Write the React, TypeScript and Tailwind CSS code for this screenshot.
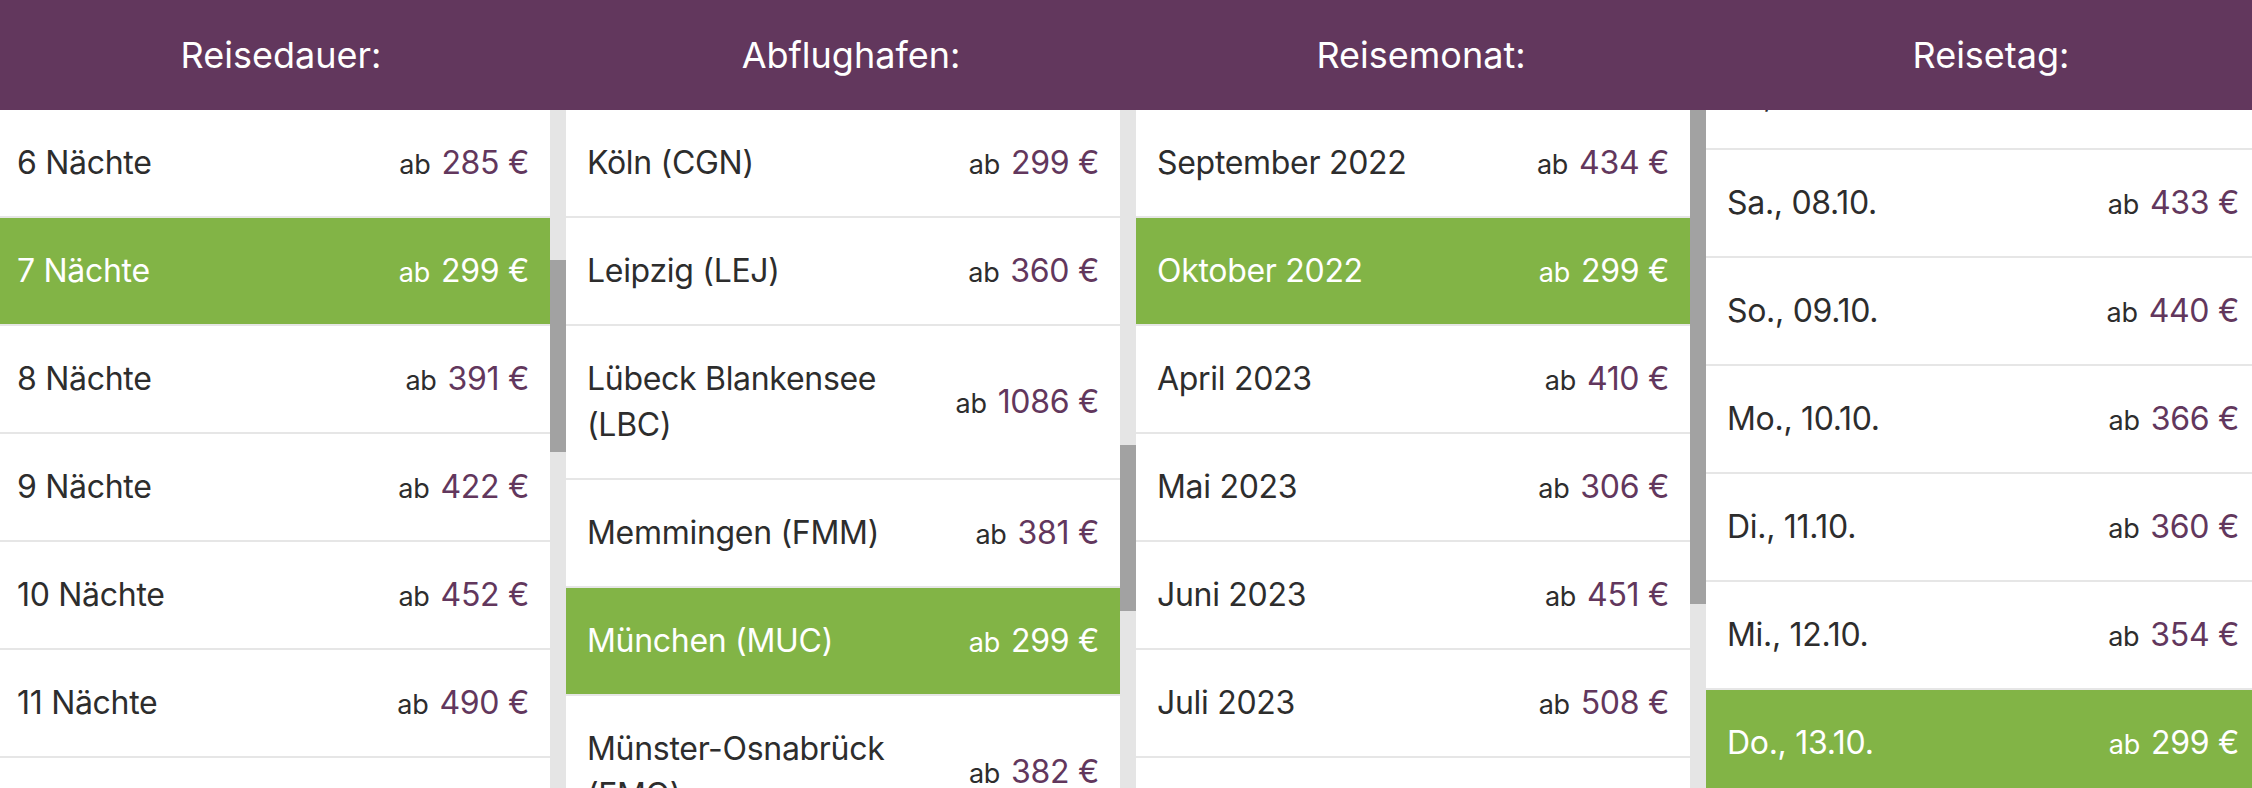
import React from "react";

type Row = { label: React.ReactNode; price: string; selected?: boolean };

type Col = {
  title: string;
  rows: Row[];
  offset: string;
  thumbTop: string;
  thumbH: string;
};

const cols: Col[] = [
  {
    title: "Reisedauer:",
    offset: "mt-0",
    thumbTop: "mt-[150px]",
    thumbH: "h-[192px]",
    rows: [
      { label: "6 Nächte", price: "285 €" },
      { label: "7 Nächte", price: "299 €", selected: true },
      { label: "8 Nächte", price: "391 €" },
      { label: "9 Nächte", price: "422 €" },
      { label: "10 Nächte", price: "452 €" },
      { label: "11 Nächte", price: "490 €" },
      { label: "12 Nächte", price: "512 €" },
    ],
  },
  {
    title: "Abflughafen:",
    offset: "mt-0",
    thumbTop: "mt-[335px]",
    thumbH: "h-[166px]",
    rows: [
      { label: "Köln (CGN)", price: "299 €" },
      { label: "Leipzig (LEJ)", price: "360 €" },
      {
        label: (
          <>
            Lübeck Blankensee
            <br />
            (LBC)
          </>
        ),
        price: "1086 €",
      },
      { label: "Memmingen (FMM)", price: "381 €" },
      { label: "München (MUC)", price: "299 €", selected: true },
      {
        label: (
          <>
            Münster-Osnabrück
            <br />
            (FMO)
          </>
        ),
        price: "382 €",
      },
    ],
  },
  {
    title: "Reisemonat:",
    offset: "mt-0",
    thumbTop: "mt-0",
    thumbH: "h-[494px]",
    rows: [
      { label: "September 2022", price: "434 €" },
      { label: "Oktober 2022", price: "299 €", selected: true },
      { label: "April 2023", price: "410 €" },
      { label: "Mai 2023", price: "306 €" },
      { label: "Juni 2023", price: "451 €" },
      { label: "Juli 2023", price: "508 €" },
      { label: "August 2023", price: "524 €" },
    ],
  },
  {
    title: "Reisetag:",
    offset: "-mt-[68px]",
    thumbTop: "mt-[120px]",
    thumbH: "h-[300px]",
    rows: [
      { label: "Fr., 07.10.", price: "412 €" },
      { label: "Sa., 08.10.", price: "433 €" },
      { label: "So., 09.10.", price: "440 €" },
      { label: "Mo., 10.10.", price: "366 €" },
      { label: "Di., 11.10.", price: "360 €" },
      { label: "Mi., 12.10.", price: "354 €" },
      { label: "Do., 13.10.", price: "299 €", selected: true },
    ],
  },
];

function RowItem({ row }: { row: Row }) {
  const sel = !!row.selected;
  return (
    <div
      className={
        "flex items-center justify-between px-[21px] py-[30px] border-b-2 border-[#e6e6e6] " +
        (sel ? "bg-[#82b446]" : "bg-white")
      }
    >
      <div
        className={
          "text-[32px] leading-[46px] tracking-[-0.3px] " + (sel ? "text-white" : "text-[#2d2d2d]")
        }
      >
        {row.label}
      </div>
      <div className="whitespace-nowrap text-[32px] leading-[46px] tracking-[-0.3px] h-[46px]">
        <span className={"text-[27px] leading-none " + (sel ? "text-white" : "text-[#2d2d2d]")}>ab</span>
        <span className={"ml-[11px] " + (sel ? "text-white" : "text-[#62375d]")}>{row.price}</span>
      </div>
    </div>
  );
}

function Column({ col }: { col: Col }) {
  return (
    <div className="flex flex-col w-[570px] shrink-0">
      <div className="h-[110px] bg-[#62375d] flex items-center justify-center text-white text-[36px] leading-none">
        {col.title}
      </div>
      <div className="flex h-[678px]">
        <div className="w-[554px] overflow-hidden bg-white">
          <div className={"flex flex-col " + col.offset}>
            {col.rows.map((r, i) => (
              <RowItem key={i} row={r} />
            ))}
          </div>
        </div>
        <div className="w-[16px] bg-[#e5e5e5] flex flex-col">
          <div className={"w-full bg-[#a2a2a2] " + col.thumbTop + " " + col.thumbH} />
        </div>
      </div>
    </div>
  );
}

export default function App() {
  return (
    <div
      className="w-[2252px] h-[788px] overflow-hidden bg-white"
      style={{ fontFamily: "Inter, 'Noto Sans', 'Liberation Sans', sans-serif" }}
    >
      <div className="flex -ml-[4px] w-[2280px]">
        {cols.map((c, i) => (
          <Column key={i} col={c} />
        ))}
      </div>
    </div>
  );
}
